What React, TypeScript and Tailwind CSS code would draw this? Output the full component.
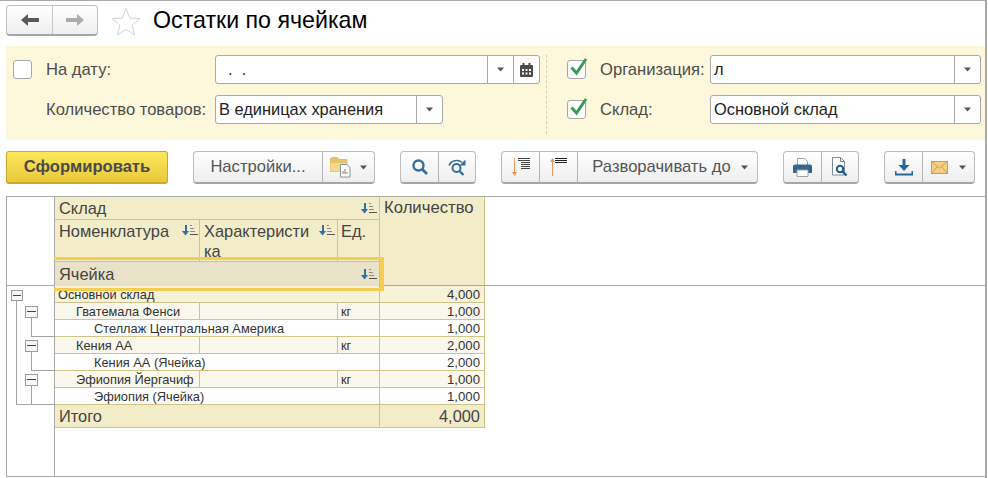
import type { ReactNode } from "react"

const Caret = () => (
  <svg width="9" height="5" viewBox="0 0 9 5" className="block">
    <path d="M1 0.500h7L4.500 4.500z" fill="#555" />
  </svg>
)

const CheckBox = ({ checked }: { checked?: boolean }) => (
  <div className="relative w-[19px] h-[19px] shrink-0 bg-white border border-[#a8a8a8] rounded-[3px]">
    {checked && (
      <svg width="22" height="22" viewBox="0 0 22 22" className="absolute left-0 top-[-6px]">
        <path d="M3.500 12.500l5 5.500L18 4" fill="none" stroke="#3f9a58" strokeWidth="3" />
      </svg>
    )}
  </div>
)

const Field = ({ text, width, extra }: { text: string; width: string; extra?: ReactNode }) => (
  <div className={`flex h-[29px] bg-white border border-[#a9a9a9] rounded-[3px] ${width}`}>
    <div className="flex-1 pl-[3px] text-[16.4px] leading-[27px] text-[#222] whitespace-pre overflow-hidden">{text}</div>
    <div className="w-[26px] border-l border-[#a9a9a9] flex items-center justify-center">
      <Caret />
    </div>
    {extra}
  </div>
)

const Calendar = () => (
  <div className="w-[26px] border-l border-[#a9a9a9] flex items-center justify-center">
    <svg width="13" height="14" viewBox="0 0 13 14">
      <path d="M1 2h11a1 1 0 0 1 1 1v10a1 1 0 0 1-1 1H1a1 1 0 0 1-1-1V3a1 1 0 0 1 1-1z" fill="#4a4a4a" />
      <path d="M2.500 0h2v3h-2zM8.500 0h2v3h-2z" fill="#4a4a4a" />
      <path d="M2 6h2v2H2zM5.500 6h2v2h-2zM9 6h2v2H9zM2 9.500h2v2H2zM5.500 9.500h2v2h-2zM9 9.500h2v2H9z" fill="#fff" />
    </svg>
  </div>
)

const Seg = ({ className, children }: { className: string; children: ReactNode }) => (
  <div className={`h-full flex items-center justify-center border-r border-[#b4b4b4] last:border-r-0 ${className}`}>
    {children}
  </div>
)

const Group = ({ className, children }: { className: string; children: ReactNode }) => (
  <div className={`flex h-[33px] bg-gradient-to-b from-white to-[#eeeeee] border border-[#bdbdbd] border-b-2 border-b-[#a6a6a6] rounded-[4px] ${className}`}>
    {children}
  </div>
)

const Search = () => (
  <svg width="18" height="18" viewBox="0 0 18 18">
    <circle cx="7.500" cy="7.500" r="5" fill="none" stroke="#35709f" strokeWidth="2.400" />
    <path d="M11 11l5 5" stroke="#35709f" strokeWidth="2.800" />
  </svg>
)

const SearchAgain = () => (
  <svg width="20" height="18" viewBox="0 0 20 18">
    <circle cx="9.500" cy="10" r="4" fill="none" stroke="#35709f" strokeWidth="2" />
    <path d="M12.500 13l4 4" stroke="#35709f" strokeWidth="2.400" />
    <path d="M2 7.500C4 2.500 11 1 15 4.500" fill="none" stroke="#35709f" strokeWidth="1.600" />
    <path d="M18.500 1.500v6h-6z" fill="#35709f" />
  </svg>
)

const FolderChart = () => (
  <svg width="22" height="22" viewBox="0 0 22 22">
    <path d="M0 3.500l1.500-2h6l1.500 2h8v12H0z" fill="#e8c26a" stroke="#d8b25f" strokeWidth="0.800" />
    <path d="M0.500 7h16.500v8.500H0.500z" fill="#f5d88f" />
    <path d="M10.500 8.500h6.500l3 3v9.500h-9.500z" fill="#fff" stroke="#8a9199" />
    <path d="M13 18v-3" stroke="#3f9a58" strokeWidth="1" />
    <path d="M15 18v-5" stroke="#d2553f" strokeWidth="1" />
    <path d="M17 18v-2" stroke="#4a7ab0" strokeWidth="1" />
  </svg>
)

const ExpandDown = () => (
  <svg width="18" height="20" viewBox="0 0 18 20" shapeRendering="crispEdges">
    <path d="M2.500 1v15" stroke="#e8965a" strokeWidth="1" />
    <path d="M0 15h5l-2.500 4z" fill="#e8965a" shapeRendering="auto" />
    <path d="M6 1.500h12M6 3.500h12M9 5.500h9M9 7.500h9M9 9.500h9M9 11.500h9" stroke="#444" strokeWidth="1" />
  </svg>
)

const ExpandUp = () => (
  <svg width="18" height="20" viewBox="0 0 18 20" shapeRendering="crispEdges">
    <path d="M2.500 4v15" stroke="#e8965a" strokeWidth="1" />
    <path d="M0 5h5L2.500 1z" fill="#e8965a" shapeRendering="auto" />
    <path d="M5 1.500h12M5 3.500h12M5 5.500h12" stroke="#222" strokeWidth="1" />
  </svg>
)

const Printer = () => (
  <svg width="19" height="19" viewBox="0 0 19 19">
    <path d="M4.500 0.500h7l3 3v4h-10z" fill="#fff" stroke="#9aa3ad" />
    <path d="M2 6.500h15a2 2 0 0 1 2 2v6.500H0V8.500a2 2 0 0 1 2-2z" fill="#34678f" />
    <path d="M4 12h11v6.500H4z" fill="#fff" stroke="#9aa3ad" />
  </svg>
)

const DocSearch = () => (
  <svg width="19" height="20" viewBox="0 0 19 20">
    <path d="M1.500 0.500h8l4 4v13.500h-12z" fill="#fff" stroke="#7d8c9b" />
    <path d="M9.500 0.500v4h4" fill="none" stroke="#7d8c9b" />
    <circle cx="9" cy="12" r="3.200" fill="#fff" stroke="#1f5a87" strokeWidth="2" />
    <path d="M11.500 14.500l4 4" stroke="#1f5a87" strokeWidth="2.400" />
  </svg>
)

const Download = () => (
  <svg width="18" height="17" viewBox="0 0 18 17">
    <path d="M7.500 0h3v6h4l-5.500 6-5.500-6h4z" fill="#23699b" />
    <path d="M0.500 12v3.500h17V12" fill="none" stroke="#23699b" strokeWidth="2" />
  </svg>
)

const Mail = () => (
  <svg width="17" height="13" viewBox="0 0 17 13">
    <rect x="0.500" y="0.500" width="16" height="12" fill="#f3d084" stroke="#cf9d4c" />
    <path d="M0.500 0.500l8 6.500 8-6.500M0.500 12.500l6-7M16.500 12.500l-6-7" fill="none" stroke="#cf9d4c" />
  </svg>
)

const SortIcon = () => (
  <svg width="16" height="11" viewBox="0 0 16 11" className="block" shapeRendering="crispEdges">
    <path d="M2.500 0h2v6h-2z" fill="#2f6fa8" />
    <path d="M0 6h7l-3.500 4.500z" fill="#2f6fa8" shapeRendering="auto" />
    <path d="M8 0.500h2M8 3.500h4M8 6.500h5" stroke="#8a8a8a" />
    <path d="M8 9.500h8" stroke="#555" />
  </svg>
)

const TreeGutter = () => {
  const boxes = [
    [4, 4, 11, 10],
    [18, 20, 12, 11],
    [18, 54, 12, 11],
    [18, 88, 12, 11],
  ]
  return (
    <svg width="47" height="189" viewBox="0 0 47 189" className="block" shapeRendering="crispEdges">
      <g fill="none" stroke="#a3a3a3">
        <path d="M9.500 14v104.500H47" />
        <path d="M24.500 31v19.500H47" />
        <path d="M24.500 65v19.500H47" />
        <path d="M24.500 99v19.500" />
      </g>
      {boxes.map(([x, y, w, h], i) => (
        <g key={i}>
          <rect x={x + 0.5} y={y + 0.5} width={w} height={h} fill="#f7f7f7" stroke="#9c9c9c" />
          <path d={`M${x + 2} ${y + 5.5}h${w - 3}`} stroke="#444" />
        </g>
      ))}
    </svg>
  )
}

const rows = [
  { kind: "group", name: "Основной склад", qty: "4,000" },
  { kind: "item", name: "Гватемала Фенси", qty: "1,000" },
  { kind: "cell", name: "Стеллаж Центральная Америка", qty: "1,000" },
  { kind: "item", name: "Кения АА", qty: "2,000" },
  { kind: "cell", name: "Кения АА (Ячейка)", qty: "2,000" },
  { kind: "item", name: "Эфиопия Йергачиф", qty: "1,000" },
  { kind: "cell", name: "Эфиопия (Ячейка)", qty: "1,000" },
]

const ReportRow = ({ row }: { row: (typeof rows)[number] }) => {
  const base = "h-[17px] border-b border-[#cfc486] text-[12.8px] leading-[18px] text-[#333] whitespace-nowrap"
  const qty = `w-[105px] border-r border-[#cfc486] text-right pr-[4px] !text-[13.2px] ${base}`
  if (row.kind === "item") {
    return (
      <div className="flex">
        <div className={`w-[145px] bg-[#faf7ec] border-r border-[#cfc486] pl-[21px] ${base}`}>{row.name}</div>
        <div className={`w-[138px] bg-[#faf7ec] border-r border-[#cfc486] ${base}`} />
        <div className={`w-[42px] bg-[#faf7ec] border-r border-[#cfc486] pl-[3px] ${base}`}>кг</div>
        <div className={`bg-[#faf7ec] ${qty}`}>{row.qty}</div>
      </div>
    )
  }
  const group = row.kind === "group"
  return (
    <div className="flex">
      <div className={`w-[325px] border-r border-[#cfc486] ${group ? "bg-[#f6f2da] pl-[3px]" : "bg-white pl-[39px]"} ${base}`}>
        {row.name}
      </div>
      <div className={`${group ? "bg-[#f6f2da]" : "bg-white"} ${qty}`}>{row.qty}</div>
    </div>
  )
}

export default function App() {
  return (
    <div className="w-[988px] h-[478px] overflow-hidden bg-white font-['Liberation_Sans',Arial,sans-serif]">
      <div className="w-[987px] h-[478px] border-t border-r-2 border-[#a9a9a9]">
        {/* Title */}
        <div className="flex items-start h-[45px] pl-[6px] pt-[4px]">
          <div className="flex h-[31px] w-[92px] bg-gradient-to-b from-white to-[#eeeeee] border border-[#c0c0c0] border-b-2 border-b-[#a6a6a6] rounded-[4px]">
            <div className="w-[46px] border-r border-[#c8c8c8] flex items-center justify-center">
              <svg width="18" height="12" viewBox="0 0 18 12">
                <path d="M7 0v4h11v4H7v4L0 6z" fill="#585858" />
              </svg>
            </div>
            <div className="flex-1 flex items-center justify-center">
              <svg width="18" height="12" viewBox="0 0 18 12">
                <path d="M11 0v4H0v4h11v4l7-6z" fill="#acacac" />
              </svg>
            </div>
          </div>
          <svg width="30" height="29" viewBox="0 0 30 29" className="ml-[13px] mt-[2px]">
            <path d="M15 1.500l3.800 9.500 10 .7-7.700 6.400 2.500 9.800L15 22.500l-8.600 5.400 2.500-9.800L1.200 11.700l10-.7z" fill="none" stroke="#d0d3d6" />
          </svg>
          <h1 className="ml-[12px] text-[23.2px] leading-[30px] text-black whitespace-nowrap">Остатки по ячейкам</h1>
        </div>

        {/* Filters */}
        <div className="ml-[6px] h-[94px] bg-[#fdf8dc] flex pt-[9px] text-[16.6px] text-[#4d4d4d]">
          <div className="w-[534px] flex flex-col gap-[11px]">
            <div className="flex items-center h-[29px]">
              <div className="ml-[7px]">
                <CheckBox />
              </div>
              <span className="ml-[14px] w-[169px] mt-[2px]">На дату:</span>
              <Field text="  .  ." width="w-[325px]" extra={<Calendar />} />
            </div>
            <div className="flex items-center h-[29px]">
              <span className="ml-[40px] w-[169px] mt-[2px] whitespace-nowrap">Количество товаров:</span>
              <Field text="В единицах хранения" width="w-[228px]" />
            </div>
          </div>
          <div className="ml-[6px] h-[79px] border-l border-dashed border-[#d0d0c0]" />
          <div className="flex flex-col gap-[11px]">
            <div className="flex items-center h-[29px]">
              <div className="ml-[20px]">
                <CheckBox checked />
              </div>
              <span className="ml-[14px] w-[110px] mt-[2px] whitespace-nowrap">Организация:</span>
              <Field text="л" width="w-[271px]" />
            </div>
            <div className="flex items-center h-[29px]">
              <div className="ml-[20px]">
                <CheckBox checked />
              </div>
              <span className="ml-[14px] w-[110px] mt-[2px]">Склад:</span>
              <Field text="Основной склад" width="w-[271px]" />
            </div>
          </div>
        </div>

        {/* Commands */}
        <div className="flex mt-[11px] ml-[6px] h-[33px] text-[16.6px] text-[#555]">
          <div className="w-[162px] h-[33px] flex items-center justify-center bg-gradient-to-b from-[#fde75c] to-[#e9c93a] border border-[#c8a92e] border-b-2 rounded-[3px] font-bold text-[#4a4a4a]">
            Сформировать
          </div>
          <Group className="ml-[25px] w-[182px]">
            <Seg className="w-[129px]">Настройки...</Seg>
            <Seg className="flex-1 gap-[7px]">
              <FolderChart />
              <Caret />
            </Seg>
          </Group>
          <Group className="ml-[25px] w-[76px]">
            <Seg className="w-[38px]"><Search /></Seg>
            <Seg className="flex-1"><SearchAgain /></Seg>
          </Group>
          <Group className="ml-[25px] w-[257px]">
            <Seg className="w-[38px]"><ExpandDown /></Seg>
            <Seg className="w-[38px]"><ExpandUp /></Seg>
            <Seg className="flex-1 gap-[9px] pl-[6px] whitespace-nowrap">
              Разворачивать до
              <Caret />
            </Seg>
          </Group>
          <Group className="ml-[25px] w-[76px]">
            <Seg className="w-[38px]"><Printer /></Seg>
            <Seg className="flex-1"><DocSearch /></Seg>
          </Group>
          <Group className="ml-[25px] w-[91px]">
            <Seg className="w-[38px]"><Download /></Seg>
            <Seg className="flex-1 gap-[10px]">
              <Mail />
              <Caret />
            </Seg>
          </Group>
        </div>

        {/* Report */}
        <div className="relative flex flex-col mt-[12px] ml-[6px] h-[281px] border-t border-l border-b border-[#a9a9a9] text-[#444]">
          <div className="flex h-[89px] shrink-0 border-b border-[#a9a9a9]">
            <div className="w-[48px] border-r border-[#a9a9a9]" />
            <div className="flex w-[430px] bg-[#f2ecc8] border-r border-[#cfc486] text-[16.4px]">
              <div className="w-[325px] border-r border-[#cfc486] flex flex-col">
                <div className="h-[23px] border-b border-[#cfc486] flex items-center justify-between pl-[4px] pr-[2px]">
                  <span>Склад</span>
                  <SortIcon />
                </div>
                <div className="flex h-[42px]">
                  <div className="w-[145px] border-r border-[#cfc486] flex justify-between pl-[4px] pr-[1px] pt-[1px] leading-[20px]">
                    <span>Номенклатура</span>
                    <span className="mt-[4px]"><SortIcon /></span>
                  </div>
                  <div className="w-[138px] border-r border-[#cfc486] flex justify-between pl-[4px] pr-[2px] pt-[1px] leading-[20px]">
                    <span className="w-[110px] break-all">Характеристика</span>
                    <span className="mt-[4px]"><SortIcon /></span>
                  </div>
                  <div className="flex-1 pl-[3px] pt-[1px] leading-[20px]">Ед.</div>
                </div>
                <div className="flex-1 bg-[#e8e2c8] border-t border-[#cfc486] flex items-center justify-between pl-[4px] pr-[2px] pb-[2px]">
                  <span>Ячейка</span>
                  <SortIcon />
                </div>
              </div>
              <div className="flex-1 pl-[4px] pt-[1px] leading-[20px] text-[16.7px]">Количество</div>
            </div>
          </div>
          <div className="flex flex-1">
            <div className="w-[48px] border-r border-[#a9a9a9]">
              <TreeGutter />
            </div>
            <div className="w-[430px]">
              {rows.map((row) => (
                <ReportRow key={row.name} row={row} />
              ))}
              <div className="flex h-[23px] bg-[#f2ecc8] border-b border-r border-[#cfc486] text-[16.4px] leading-[22px]">
                <div className="w-[325px] border-r border-[#cfc486] pl-[4px]">Итого</div>
                <div className="flex-1 text-right pr-[4px]">4,000</div>
              </div>
            </div>
          </div>
          <div className="absolute left-[47px] top-[60px] w-[330px] h-[34px] border-y-[3px] border-r-[4px] border-[#f4cd52]" />
        </div>
      </div>
    </div>
  )
}
